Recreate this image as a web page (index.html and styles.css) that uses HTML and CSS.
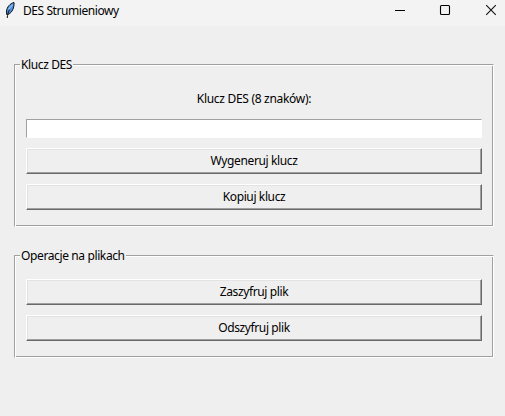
FILE: index.html
```html
<!DOCTYPE html>
<html lang="pl">
<head>
<meta charset="utf-8">
<title>DES Strumieniowy</title>
<link rel="stylesheet" href="styles.css">
</head>
<body>
<header class="titlebar">
  <svg class="feather" width="12" height="18" viewBox="0 0 12 18">
    <path d="M10 1.500C6 2.500 3 6 2.500 10L2.700 13.500L4.500 13.300C8 11.500 10.500 6.500 10 1.500Z" fill="#4a90e0" stroke="#111" stroke-width="1"/>
    <path d="M5.500 8.500C4.300 11 3.600 13.500 3.200 17" fill="none" stroke="#111" stroke-width="1"/>
    <path d="M8.500 3.600L4.500 8.500" stroke="#8cc4f5" stroke-width="1.200"/>
  </svg>
  <h1 class="title">DES Strumieniowy</h1>
  <div class="controls">
    <svg width="12" height="12" viewBox="0 0 12 12"><path d="M1 6.500H11" stroke="#000"/></svg>
    <svg width="12" height="12" viewBox="0 0 12 12"><rect x="1.500" y="1.500" width="9" height="9" rx="1" fill="none" stroke="#000" stroke-width="1.100"/></svg>
    <svg class="close" width="12" height="12" viewBox="0 0 12 12"><path d="M1.200 1.200L10.800 10.800M10.800 1.200L1.200 10.800" stroke="#111" stroke-width="1.100"/></svg>
  </div>
</header>
<main class="content">
  <section class="group group-key">
    <h2 class="legend">Klucz DES</h2>
    <label class="label" for="key">Klucz DES (8 znaków):</label>
    <input class="entry" id="key" type="text">
    <button class="btn">Wygeneruj klucz</button>
    <button class="btn">Kopiuj klucz</button>
  </section>
  <section class="group group-files">
    <h2 class="legend">Operacje na plikach</h2>
    <button class="btn">Zaszyfruj plik</button>
    <button class="btn">Odszyfruj plik</button>
  </section>
</main>
</body>
</html>
```
FILE: styles.css
```css
* { box-sizing: border-box; }
body {
  margin: 0;
  height: 416px;
  overflow: hidden;
  background: #efefef;
  color: #000;
  font: 12px/16px "Noto Sans", "Open Sans", sans-serif;
  letter-spacing: -0.38px;
}
.titlebar {
  display: flex;
  align-items: flex-start;
  height: 26px;
  padding: 1px 8px 0 4px;
  background: #f3f3f3;
}
.feather { margin-right: 7px; }
.title { margin: 2px auto 0 0; font: inherit; letter-spacing: -0.43px; white-space: nowrap; }
.controls { display: flex; gap: 33px; padding-top: 3px; }
.controls svg { display: block; }
.controls .close { margin-left: 1px; }
.content {
  display: flex;
  flex-direction: column;
  gap: 28px;
  padding: 38px 11px 0 14px;
}
.group {
  position: relative;
  display: flex;
  flex-direction: column;
  gap: 10px;
  padding: 0 11px;
  border: 1px solid;
  border-color: #a0a0a0 #fff #fff #a0a0a0;
  box-shadow: inset 1px 1px #fff, inset -1px -1px #a0a0a0;
}
.group-key { height: 163px; padding-top: 26px; }
.group-files { height: 103px; padding-top: 23px; }
.legend {
  position: absolute;
  top: -8px;
  left: 5px;
  margin: 0;
  padding: 0 1px;
  font: inherit;
  white-space: nowrap;
  background: #efefef;
}
.label { height: 18px; text-align: center; letter-spacing: -0.3px; }
.entry {
  width: 456px;
  height: 19px;
  margin: 0;
  padding: 0 2px;
  border: 1px solid;
  border-color: #a0a0a0 #fff #fff #a0a0a0;
  background: #fff;
  font: inherit;
  outline: none;
}
.btn {
  width: 456px;
  height: 26px;
  margin: 0;
  padding: 0;
  border: 1px solid;
  border-color: #fff #696969 #696969 #fff;
  box-shadow: inset -1px -1px #a0a0a0, inset 1px 1px #e3e3e3;
  background: #efefef;
  color: #000;
  font: inherit;
  letter-spacing: inherit;
}
```
